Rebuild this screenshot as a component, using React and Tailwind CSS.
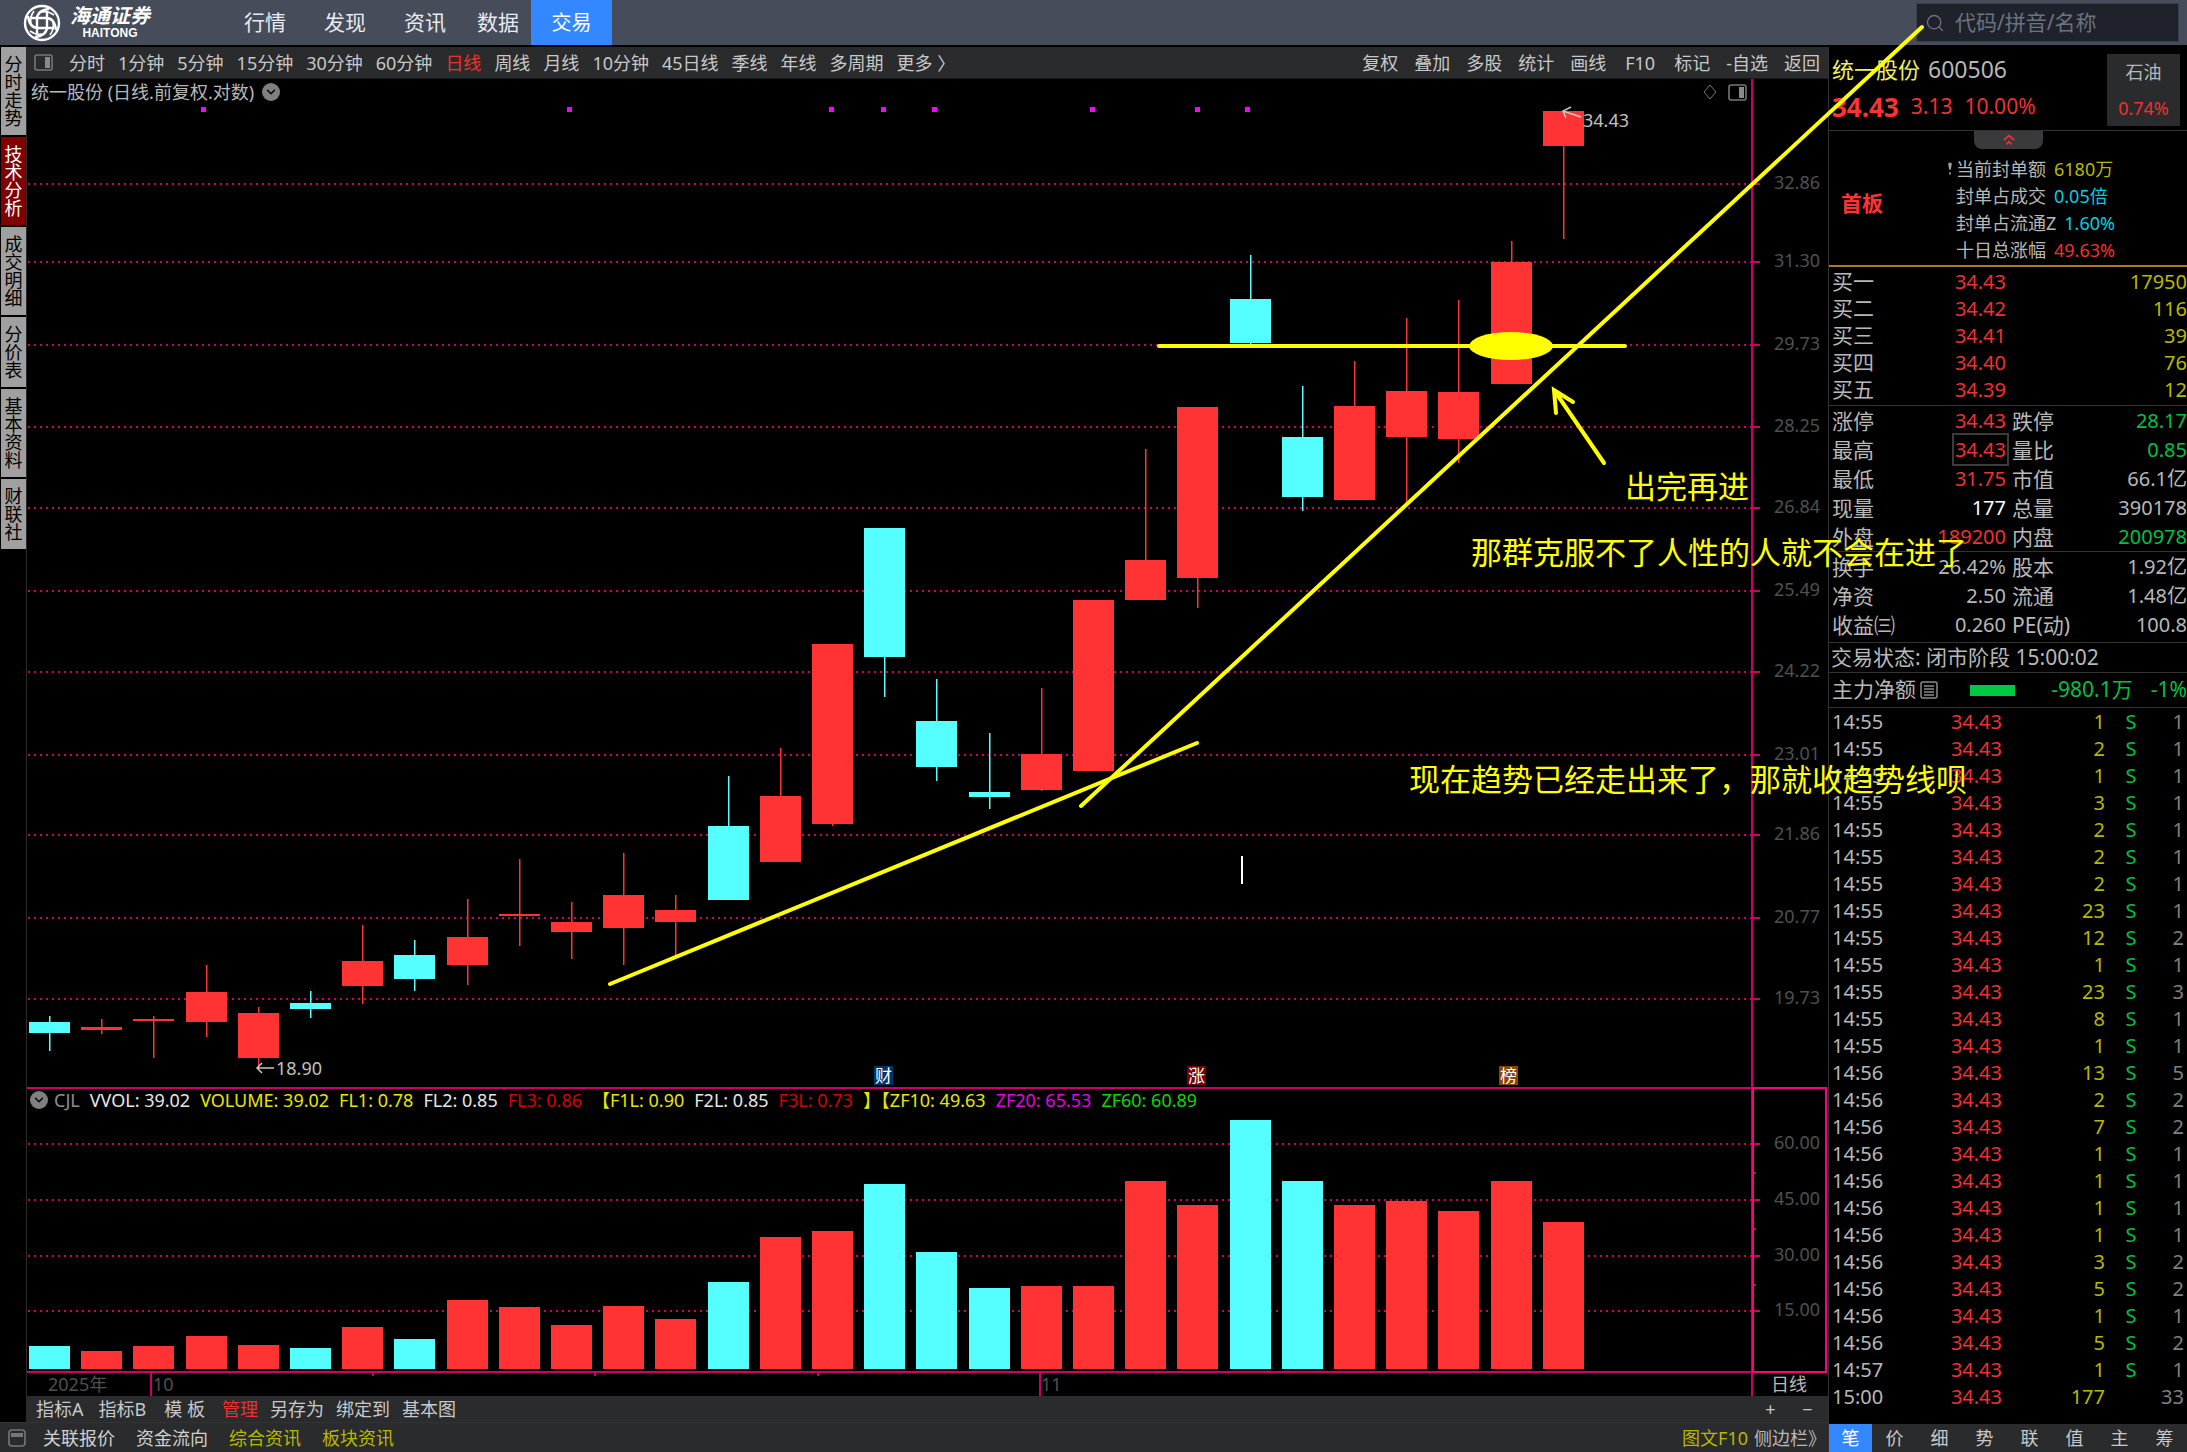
import React, { useState } from 'react';
import { ChevronDown, Search } from 'lucide-react';

const RED = '#ff3333';
const CYAN = '#55ffff';
const AXIS = '#cc0066';
const STEP = 52.2;

const menus = ['行情', '发现', '资讯'];
const periods = ['分时', '1分钟', '5分钟', '15分钟', '30分钟', '60分钟', '日线', '周线', '月线', '10分钟', '45日线', '季线', '年线', '多周期', '更多 〉'];
const tools = ['复权', '叠加', '多股', '统计', '画线', 'F10', '标记', '-自选', '返回'];
const sideTabs = ['分时走势', '技术分析', '成交明细', '分价表', '基本资料', '财联社'];
const detailTabs = ['笔', '价', '细', '势', '联', '值', '主', '筹'];

// up, high, body top, body bottom, low, volume top
const candles = [
  [0, 1016, 1022, 1033, 1051, 1346],
  [1, 1019, 1027, 1030, 1034, 1351],
  [1, 1016, 1019, 1021, 1058, 1346],
  [1, 965, 992, 1022, 1037, 1336],
  [1, 1007, 1013, 1058, 1067, 1345],
  [0, 991, 1003, 1009, 1018, 1348],
  [1, 925, 961, 986, 1004, 1327],
  [0, 940, 955, 979, 991, 1339],
  [1, 899, 937, 965, 985, 1300],
  [1, 859, 914, 916, 946, 1307],
  [1, 902, 922, 932, 959, 1325],
  [1, 853, 895, 928, 965, 1306],
  [1, 895, 910, 922, 955, 1319],
  [0, 776, 826, 900, 900, 1282],
  [1, 748, 796, 862, 862, 1237],
  [1, 644, 644, 824, 826, 1231],
  [0, 528, 528, 657, 697, 1184],
  [0, 679, 721, 767, 781, 1252],
  [0, 733, 792, 797, 809, 1288],
  [1, 688, 754, 790, 791, 1286],
  [1, 600, 600, 771, 771, 1286],
  [1, 449, 560, 600, 600, 1181],
  [1, 407, 407, 578, 608, 1205],
  [0, 255, 299, 343, 344, 1120],
  [0, 386, 437, 497, 511, 1181],
  [1, 361, 406, 500, 500, 1205],
  [1, 318, 391, 437, 503, 1201],
  [1, 300, 392, 439, 463, 1211],
  [1, 241, 262, 384, 384, 1181],
  [1, 111, 111, 146, 239, 1222],
];

const priceTicks = [
  ['32.86', 184], ['31.30', 262], ['29.73', 345], ['28.25', 427], ['26.84', 508], ['25.49', 591],
  ['24.22', 672], ['23.01', 755], ['21.86', 835], ['20.77', 918], ['19.73', 999],
];
const volumeTicks = [['60.00', 1144], ['45.00', 1200], ['30.00', 1256], ['15.00', 1311]];
const signals = [203, 569, 831, 883, 934, 1092, 1197, 1247];
const events = [['财', 874, '#003366'], ['涨', 1187, '#7a0000'], ['榜', 1499, '#8c4400']];

const indicators = [
  ['VVOL: 39.02', 'text-[#e6e6e6]'],
  ['VOLUME: 39.02', 'text-[#e6e600]'],
  ['FL1: 0.78', 'text-[#e6e600]'],
  ['FL2: 0.85', 'text-[#e6e6e6]'],
  ['FL3: 0.86', 'text-[#d80000]'],
  ['【F1L: 0.90', 'text-[#e6e600]'],
  ['F2L: 0.85', 'text-[#e6e6e6]'],
  ['F3L: 0.73', 'text-[#d80000]'],
  ['】【ZF10: 49.63', 'text-[#e6e600]'],
  ['ZF20: 65.53', 'text-[#e600e6]'],
  ['ZF60: 60.89', 'text-[#00dc00]'],
];

const bids = [
  ['买一', '34.43', '17950'],
  ['买二', '34.42', '116'],
  ['买三', '34.41', '39'],
  ['买四', '34.40', '76'],
  ['买五', '34.39', '12'],
];

const R = 'text-[#f03030]';
const G = 'text-[#00c040]';
const W = 'text-[#b8b8b8]';
const stats = [
  ['涨停', '34.43', R, '跌停', '28.17', G],
  ['最高', '34.43', R, '量比', '0.85', G],
  ['最低', '31.75', R, '市值', '66.1亿', W],
  ['现量', '177', 'text-white', '总量', '390178', W],
  ['外盘', '189200', R, '内盘', '200978', G],
];
const finance = [
  ['换手', '26.42%', W, '股本', '1.92亿', W],
  ['净资', '2.50', W, '流通', '1.48亿', W],
  ['收益㈢', '0.260', W, 'PE(动)', '100.8', W],
];

const sealInfo = [
  ['当前封单额', '6180万', 'text-[#b8b800]'],
  ['封单占成交', '0.05倍', 'text-[#00d0e0]'],
  ['封单占流通Z', '1.60%', 'text-[#00d0e0]'],
  ['十日总涨幅', '49.63%', R],
];

const trades = [
  ['14:55', 1, 1], ['14:55', 2, 1], ['14:55', 1, 1], ['14:55', 3, 1], ['14:55', 2, 1], ['14:55', 2, 1],
  ['14:55', 2, 1], ['14:55', 23, 1], ['14:55', 12, 2], ['14:55', 1, 1], ['14:55', 23, 3], ['14:55', 8, 1],
  ['14:55', 1, 1], ['14:56', 13, 5], ['14:56', 2, 2], ['14:56', 7, 2], ['14:56', 1, 1], ['14:56', 1, 1],
  ['14:56', 1, 1], ['14:56', 1, 1], ['14:56', 3, 2], ['14:56', 5, 2], ['14:56', 1, 1], ['14:56', 5, 2],
  ['14:57', 1, 1], ['15:00', 177, 33],
];

function Logo() {
  return (
    <div className="flex items-center gap-2 pl-[23px] text-white">
      <svg viewBox="0 0 38 38" className="size-[38px]" fill="none" stroke="currentColor" strokeWidth="2.4">
        <circle cx="19" cy="19" r="17" />
        <path d="M14 31V15C14 9 18 6 26 5M24 7v16c0 6-4 9-12 10M7 14h16c6 0 9 4 10 12M31 24H15C9 24 6 20 5 12" />
        <path d="M11 7c-3 4-4 8-3 12M27 31c3-4 4-8 3-12M31 11c-4-3-8-4-12-3M7 27c4 3 8 4 12 3" strokeWidth="1.6" />
      </svg>
      <div className="flex w-[82px] flex-col items-center">
        <span className="text-xl leading-5 font-bold italic">海通证券</span>
        <span className="font-['Liberation_Sans',sans-serif] text-xs leading-[14px] font-bold">HAITONG</span>
      </div>
    </div>
  );
}

function PanelIcon({ className }) {
  return (
    <svg viewBox="0 0 19 17" className={className}>
      <rect x="1" y="1" width="17" height="15" rx="2" fill="none" stroke="#777" strokeWidth="1.6" />
      <rect x="11" y="3" width="5" height="11" fill="#8a8a8a" />
    </svg>
  );
}

function RoundToggle({ label }) {
  return (
    <button aria-label={label} className="flex size-[18px] items-center justify-center rounded-full bg-[#808080] text-black">
      <ChevronDown size={14} strokeWidth={2.5} />
    </button>
  );
}

function TopBar() {
  return (
    <header className="flex h-[47px] items-stretch border-b-2 border-black bg-[#464c59] text-[21px] text-[#e8eaf0]">
      <Logo />
      <nav className="flex pl-[74px]">
        {menus.map((m) => (
          <button key={m} className="px-[19px]">{m}</button>
        ))}
        <button className="px-3">数据</button>
        <button className="w-[81px] bg-[#3388ff] text-xl text-white">交易</button>
      </nav>
      <label className="my-[3px] mr-2 ml-auto flex w-[263px] items-center gap-2.5 border border-[#3a3f4b] bg-[#1f222b] pl-2 text-[#6c7280]">
        <Search size={20} strokeWidth={1.6} className="shrink-0" />
        <input aria-label="搜索" placeholder="代码/拼音/名称" className="w-full bg-transparent outline-none placeholder:text-[#6c7280]" />
      </label>
    </header>
  );
}

function SideTabs() {
  const [active, setActive] = useState('技术分析');
  return (
    <nav className="flex w-[27px] shrink-0 flex-col gap-0.5 border-r border-[#2a2a2a] pl-px">
      {sideTabs.map((t) => (
        <button
          key={t}
          onClick={() => setActive(t)}
          className={`w-[25px] px-[3px] py-2 text-lg leading-[18px] ${t === active ? 'bg-[#800000] text-white' : 'bg-[#a0a0a0] text-black'}`}
        >
          {t}
        </button>
      ))}
    </nav>
  );
}

function PeriodBar() {
  const [period, setPeriod] = useState('日线');
  return (
    <div className="flex h-8 items-center border-b border-[#1a1a1a] bg-[#2a2b2d] text-lg text-[#c8c8c8]">
      <button aria-label="面板" className="pr-4 pl-[7px]">
        <PanelIcon className="h-[17px] w-[19px]" />
      </button>
      <div className="flex gap-[13px]">
        {periods.map((p) => (
          <button key={p} onClick={() => setPeriod(p)} className={p === period ? 'text-[#f03030]' : ''}>
            {p}
          </button>
        ))}
      </div>
      <div className="ml-auto flex">
        {tools.map((t) => (
          <button key={t} className="min-w-[52px] px-2">{t}</button>
        ))}
      </div>
    </div>
  );
}

function Gridlines({ ticks }) {
  return ticks.map(([label, y]) => (
    <g key={label}>
      <line x1="28" x2="1751" y1={y} y2={y} stroke={AXIS} strokeWidth="2" strokeDasharray="2 4" shapeRendering="crispEdges" />
      <line x1="1752" x2="1760" y1={y} y2={y} stroke={AXIS} strokeWidth="2" />
      <text x="1820" y={y + 5} textAnchor="end" fontSize="18" fill="#505050">{label}</text>
    </g>
  ));
}

function PriceChart() {
  return (
    <section className="relative">
      <div className="absolute inset-x-0 top-0 flex h-[26px] items-center pr-[81px] pl-1 text-lg text-[#b8b8b8]">
        <h1 className="pr-2">统一股份 (日线.前复权.对数)</h1>
        <RoundToggle label="主图指标" />
        <div className="ml-auto flex items-center gap-2.5">
          <svg viewBox="0 0 16 16" className="size-4" fill="none" stroke="#777">
            <path d="M8 1l6 7-6 7-6-7z" />
          </svg>
          <PanelIcon className="h-[17px] w-[19px]" />
        </div>
      </div>
      <svg viewBox="27 79 1801 1008" className="block h-auto w-full">
        <Gridlines ticks={priceTicks} />
        <rect x="1751" y="79" width="2" height="1008" fill={AXIS} />
        {signals.map((x) => (
          <rect key={x} x={x - 2} y="107" width="5" height="5" fill="#ff00ff" />
        ))}
        {candles.map(([up, high, top, bottom, low], i) => {
          const x = Math.round(49 + i * STEP);
          const fill = up ? RED : CYAN;
          return (
            <g key={i} fill={fill}>
              <rect x={x} y={high} width="1.5" height={low - high} />
              <rect x={x - 20} y={top} width="41" height={bottom - top} />
            </g>
          );
        })}
        <g stroke="#c8c8c8" strokeWidth="1.5" fill="none">
          <path d="M1581 117l-18-6M1571 107l-8 4 3 7" />
          <path d="M274 1068h-17M262 1063l-5 5 5 5" />
        </g>
        <text x="1583" y="127" fontSize="18" fill="#c0c0c0">34.43</text>
        <text x="276" y="1075" fontSize="18" fill="#c0c0c0">18.90</text>
        {events.map(([t, x, bg]) => (
          <g key={t}>
            <rect x={x} y="1066" width="19" height="19" fill={bg} />
            <text x={x + 1} y="1082" fontSize="17" fill="#fff">{t}</text>
          </g>
        ))}
      </svg>
    </section>
  );
}

function VolumeChart() {
  return (
    <section className="relative">
      <div className="absolute inset-x-0 top-0 flex h-[26px] items-center gap-2.5 pl-[3px] text-lg whitespace-pre">
        <RoundToggle label="副图指标" />
        <span className="-ml-1 text-[#909090]">CJL</span>
        {indicators.map(([text, color]) => (
          <span key={text} className={color}>{text}</span>
        ))}
      </div>
      <svg viewBox="27 1087 1801 309" className="block h-auto w-full">
        <Gridlines ticks={volumeTicks} />
        {[1172, 1228, 1284].map((y) => (
          <rect key={y} x="1753" y={y} width="3" height="2" fill={AXIS} />
        ))}
        {candles.map(([up, , , , , top], i) => (
          <rect key={i} x={Math.round(49 + i * STEP) - 20} y={top} width="41" height={1369 - top} fill={up ? RED : CYAN} />
        ))}
        <g fill={AXIS}>
          <rect x="27" y="1087" width="1725" height="2" />
          <rect x="27" y="1371" width="1725" height="2" />
          <rect x="1751" y="1087" width="2" height="309" />
          <rect x="150" y="1372" width="2" height="24" />
          <rect x="1039" y="1372" width="2" height="24" />
          {[372, 594, 817].map((x) => (
            <rect key={x} x={x} y="1372" width="2" height="4" />
          ))}
        </g>
        <rect x="1753" y="1088" width="73" height="284" fill="none" stroke="#ff0080" strokeWidth="2" />
        <g fontSize="18" fill="#505050">
          <text x="48" y="1391">2025年</text>
          <text x="153" y="1391">10</text>
          <text x="1041" y="1391">11</text>
          <text x="1771" y="1391" fill="#b8b8b8">日线</text>
        </g>
      </svg>
    </section>
  );
}

function IndicatorBar() {
  return (
    <div className="flex h-[26px] items-center bg-[#2a2b2d] pl-[9px] text-lg text-[#c8c8c8]">
      <button className="pr-[15px]">指标A</button>
      <button className="pr-[18px]">指标B</button>
      <button className="pr-[17px]">模 板</button>
      <button className="pr-3 text-[#f03030]">管理</button>
      <div className="flex gap-3">
        <button>另存为</button>
        <button>绑定到</button>
        <button>基本图</button>
      </div>
      <div className="ml-auto flex pr-0.5">
        <button aria-label="放大" className="w-[37px]">+</button>
        <button aria-label="缩小" className="w-[37px]">−</button>
      </div>
    </div>
  );
}

function StatusBar() {
  return (
    <footer className="flex h-[30px] items-center gap-[21px] border-t border-[#333] bg-[#2a2b2d] pr-0.5 pl-2 text-lg text-[#d0d0d0]">
      <button aria-label="收起" className="-mr-1">
        <svg viewBox="0 0 18 18" className="size-[18px]">
          <rect x="1" y="1" width="16" height="16" rx="3" fill="none" stroke="#777" strokeWidth="1.6" />
          <rect x="3" y="4" width="12" height="4" fill="#777" />
        </svg>
      </button>
      <button>关联报价</button>
      <button>资金流向</button>
      <button className="text-[#b8b800]">综合资讯</button>
      <button className="text-[#b8b800]">板块资讯</button>
      <div className="ml-auto flex gap-1.5">
        <button className="text-[#b8b800]">图文F10</button>
        <button className="text-[#b8b8b8]">侧边栏》</button>
      </div>
    </footer>
  );
}

function StatTable({ rows }) {
  return (
    <table className="w-full table-fixed">
      <colgroup>
        <col className="w-[72px]" />
        <col className="w-[102px]" />
        <col className="w-[80px]" />
        <col />
      </colgroup>
      <tbody>
        {rows.map(([a, av, ac, b, bv, bc]) => (
          <tr key={a} className="h-[29px] leading-7">
            <th className="text-left font-normal whitespace-nowrap">{a}</th>
            <td className={`text-right text-xl leading-7 ${ac}`}>
              <span className={a === '最高' ? 'outline-2 outline-offset-1 outline-[#3c3c3c]' : ''}>{av}</span>
            </td>
            <th className="pl-1.5 text-left font-normal whitespace-nowrap">{b}</th>
            <td className={`text-right text-xl leading-7 ${bc}`}>{bv}</td>
          </tr>
        ))}
      </tbody>
    </table>
  );
}

function QuotePanel() {
  const [tab, setTab] = useState('笔');
  return (
    <aside className="flex w-[359px] shrink-0 flex-col border-l border-[#333] text-[21px] text-[#b8b8b8]">
      <div className="flex h-[84px] items-start justify-between border-b border-[#333] pt-[7px] pr-[7px] pl-[3px]">
        <div>
          <div className="flex h-[30px] items-center gap-2 text-[23px]">
            <span className="text-[22px] text-[#eeee66]">统一股份</span>
            <span>600506</span>
          </div>
          <div className="flex h-[46px] items-center gap-3 text-[#f03030]">
            <strong className="text-[26px] text-[#ff3333]">34.43</strong>
            <span>3.13</span>
            <span>10.00%</span>
          </div>
        </div>
        <div className="flex h-[72px] w-[73px] flex-col items-center justify-around bg-[#2a2b2d] text-lg">
          <span>石油</span>
          <span className="text-[#f03030]">0.74%</span>
        </div>
      </div>

      <div className="relative flex h-[136px] items-center border-b-2 border-[#b07820] pl-[12px]">
        <button aria-label="收起行情" className="absolute top-0 left-[145px] flex h-[18px] w-[69px] items-center justify-center rounded-b-lg bg-[#3a3a3c]">
          <svg viewBox="0 0 16 14" className="h-3 w-3.5" fill="none" stroke="#f03030" strokeWidth="2">
            <path d="M2 7l6-5 6 5M5 12l3-3 3 3" />
          </svg>
        </button>
        <strong className="w-[107px] pt-3 text-[#ff3333]">首板</strong>
        <ul className="pt-[23px] text-lg leading-[27px]">
          {sealInfo.map(([name, value, color], i) => (
            <li key={name} className="flex">
              <span className="flex w-2 items-center">
                {i === 0 && (
                  <svg viewBox="0 0 5 16" className="h-3.5 w-1" fill="#a0a0a0">
                    <path d="M2.500 0C4 0 5 1 4.600 3L3.400 9H1.600L.4 3C0 1 1 0 2.500 0z" />
                    <rect x="1.500" y="12" width="2" height="3" />
                  </svg>
                )}
              </span>
              <span className="pr-2">{name}</span>
              <span className={color}>{value}</span>
            </li>
          ))}
        </ul>
      </div>

      <table className="mt-px mb-0.5 ml-[3px] table-fixed">
        <tbody>
          {bids.map(([name, price, vol]) => (
            <tr key={name} className="h-[27px] leading-[27px]">
              <th className="w-[72px] text-left font-normal">{name}</th>
              <td className="w-[102px] text-right text-xl leading-[27px] text-[#f03030]">{price}</td>
              <td className="text-right text-xl leading-[27px] text-[#b8b800]">{vol}</td>
            </tr>
          ))}
        </tbody>
      </table>

      <div className="border-t border-[#333] pl-[3px]">
        <StatTable rows={stats} />
      </div>
      <div className="border-t border-[#333] pb-[3px] pl-[3px]">
        <StatTable rows={finance} />
      </div>
      <div className="flex h-[30px] items-center border-t border-[#333] pl-0.5">交易状态: 闭市阶段 15:00:02</div>
      <div className="flex h-9 items-center border-y border-[#333] pl-[3px]">
        <span>主力净额</span>
        <svg viewBox="0 0 18 18" className="ml-1 size-[18px]" fill="none" stroke="#8a8a8a" strokeWidth="1.500">
          <rect x="1" y="1" width="16" height="16" rx="2" />
          <path d="M4 5h10M4 8h10M4 11h10M4 14h10" />
        </svg>
        <span className="ml-8 h-[11px] w-[45px] bg-[#00c840]" />
        <span className="ml-auto text-[#00c040]">-980.1万</span>
        <span className="ml-[18px] text-[#00c040]">-1%</span>
      </div>

      <table className="ml-[3px] table-fixed text-xl">
        <tbody>
          {trades.map(([time, vol, count], i) => (
            <tr key={i} className="h-[27px] leading-[27px]">
              <td className="w-[72px]">{time}</td>
              <td className="w-[98px] text-right text-[#f03030]">34.43</td>
              <td className="w-[103px] text-right text-[#b8b800]">{vol}</td>
              <td className="w-[52px] text-center text-[#00c040]">{time === '15:00' ? '' : 'S'}</td>
              <td className="pr-[3px] text-right text-[#808080]">{count}</td>
            </tr>
          ))}
        </tbody>
      </table>

      <nav className="mt-auto flex h-7 bg-[#2a2b2d] text-lg">
        {detailTabs.map((t) => (
          <button
            key={t}
            onClick={() => setTab(t)}
            className={`flex-1 first:w-[43px] first:flex-none ${t === tab ? 'bg-[#3388ff] text-white' : 'text-[#c8c8c8]'}`}
          >
            {t}
          </button>
        ))}
      </nav>
    </aside>
  );
}

// Hand-drawn notes and trend lines above the whole terminal
function Annotations() {
  return (
    <svg viewBox="0 0 2187 1452" className="pointer-events-none absolute inset-0 h-full w-full">
      <g stroke="#ffff00" strokeWidth="4" strokeLinecap="round" fill="none">
        <path d="M610 984L1197 743" />
        <path d="M1081 806L1922 27" />
        <path d="M1159 346H1625" />
        <path d="M1604 463L1554 390M1573 402L1554 390L1556 413" />
      </g>
      <ellipse cx="1511" cy="346" rx="42" ry="14" fill="#ffff00" />
      <rect x="1241" y="856" width="2" height="28" fill="#fff" />
      <g fill="#ffff00" fontSize="31" fontFamily="KaiTi, STKaiti, 'Noto Sans CJK SC', sans-serif">
        <text x="1625" y="498">出完再进</text>
        <text x="1471" y="564">那群克服不了人性的人就不会在进了</text>
        <text x="1409" y="791">现在趋势已经走出来了，那就收趋势线呗</text>
      </g>
    </svg>
  );
}

export default function App() {
  return (
    <div className="relative flex min-h-screen flex-col bg-black font-['Noto_Sans','Noto_Sans_CJK_SC',sans-serif]">
      <TopBar />
      <div className="flex flex-1">
        <main className="flex min-w-0 flex-1 flex-col">
          <div className="flex flex-1">
            <SideTabs />
            <div className="min-w-0 flex-1">
              <PeriodBar />
              <PriceChart />
              <VolumeChart />
              <IndicatorBar />
            </div>
          </div>
          <StatusBar />
        </main>
        <QuotePanel />
      </div>
      <Annotations />
    </div>
  );
}
